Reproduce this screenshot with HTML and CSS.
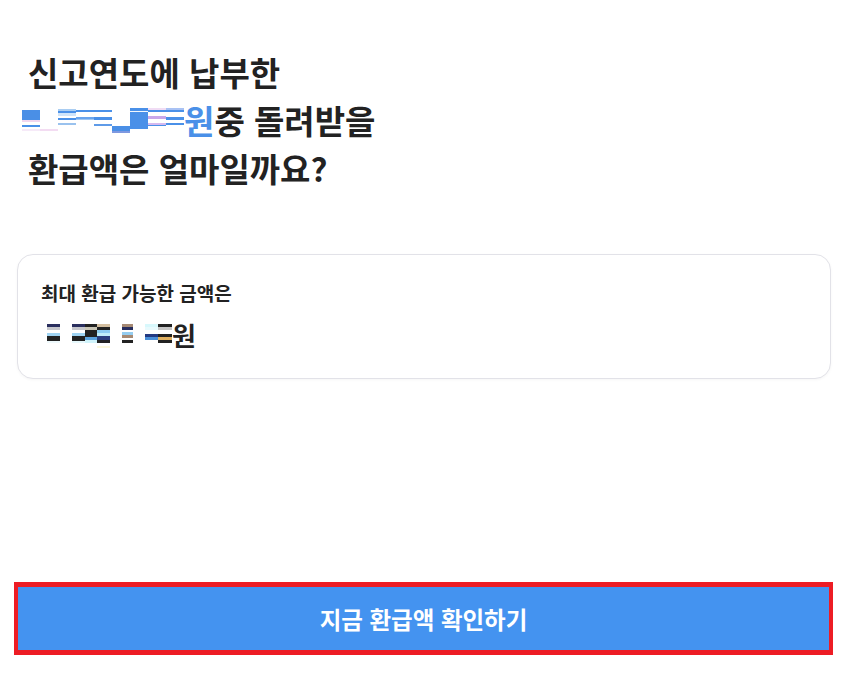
FILE: index.html
```html
<!DOCTYPE html>
<html lang="ko">
<head>
<meta charset="utf-8">
<title>환급액 확인</title>
<link rel="stylesheet" href="styles.css">
</head>
<body>
<main class="page">
  <h1 class="title">신고연도에 납부한<br><span class="mask mask-title"><span class="t t1"></span><span class="t t2"></span><span class="t t3"></span><span class="t t4"></span><span class="t t5"></span><span class="t t6"></span><span class="t t7"></span><span class="t t8"></span><span class="t t9"></span></span><span class="accent">원</span>중 돌려받을<br>환급액은 얼마일까요?</h1>

  <section class="card">
    <p class="label">최대 환급 가능한 금액은</p>
    <p class="amount"><span class="mask mask-amount"><span class="a a1"></span><span class="a gap"></span><span class="a a2"></span><span class="a a3"></span><span class="a a4"></span><span class="a gap"></span><span class="a a5"></span><span class="a gap"></span><span class="a a6"></span><span class="a a7"></span></span>원</p>
  </section>

  <div class="spacer"></div>

  <div class="cta-wrap">
    <button class="cta" type="button">지금 환급액 확인하기</button>
  </div>
</main>
</body>
</html>
```

FILE: styles.css
```css
* {
  box-sizing: border-box;
}

html,
body {
  margin: 0;
  padding: 0;
  background: #ffffff;
}

body {
  font-family: "Noto Sans CJK KR", "Noto Sans", sans-serif;
  color: #222222;
}

.page {
  min-height: 100vh;
  display: flex;
  flex-direction: column;
  padding: 0 18px 24px 17px;
}

.title {
  margin: 0;
  padding: 48px 0 0 11px;
  font-size: 33px;
  line-height: 48px;
  font-weight: 700;
  color: #222222;
  letter-spacing: 0;
}

.accent {
  color: #4a90e8;
}

.mask {
  display: inline-flex;
  vertical-align: middle;
}

.mask-title {
  margin-left: -6px;
  height: 28px;
  position: relative;
  top: -4px;
}

.t {
  display: block;
  width: 18px;
  height: 28px;
}

.t1 {
  background: linear-gradient(to bottom,
    transparent 0 3px, #4a8fe6 3px 13px, #f2d6ee 13px 15px, transparent 15px 18px,
    #4a90e8 18px 20px, transparent 20px 22px, #f6eaf8 22px 24px, transparent 24px);
}
.t2 {
  background: linear-gradient(to bottom,
    transparent 0 22px, #f3dcf2 22px 24px, transparent 24px);
}
.t3 {
  background: linear-gradient(to bottom,
    transparent 0 2px, #a9cdf2 2px 4px, #4a90e8 4px 6px, #cfe4fa 6px 9px, transparent 9px 11px,
    #4a90e8 11px 13px, transparent 13px 16px, #9ac2ee 16px 18px, transparent 18px);
}
.t4 {
  background: linear-gradient(to bottom,
    transparent 0 3px, #4a90e8 3px 5px, transparent 5px 10px, #6aa5ee 10px 12px,
    #9fc6f2 12px 13px, transparent 13px);
}
.t5 {
  background: linear-gradient(to bottom,
    transparent 0 3px, #4a90e8 3px 5px, transparent 5px 10px, #4a90e8 10px 13px,
    transparent 13px 17px, #5f9be8 17px 19px, transparent 19px);
}
.t6 {
  background: linear-gradient(to bottom,
    transparent 0 19px, #4a8fe6 19px 24px, #7e98e0 24px 26px, transparent 26px);
}
.t7 {
  background: linear-gradient(to bottom,
    transparent 0 1px, #4a90e8 1px 4px, #f2f7fd 4px 5px, #4a90e8 5px 22px, transparent 22px);
}
.t8 {
  background: linear-gradient(to bottom,
    transparent 0 1px, #f0dcf4 1px 3px, #4a90e8 3px 5px, transparent 5px 9px,
    #c9a7ea 9px 12px, transparent 12px 16px, #d6b9ef 16px 18px, #4a90e8 18px 19px, transparent 19px);
}
.t9 {
  background: linear-gradient(to bottom,
    transparent 0 1px, #a9c2f4 1px 3px, #4a90e8 3px 5px, transparent 5px 10px,
    #4a90e8 10px 13px, transparent 13px 16px, #4a90e8 16px 18px, transparent 18px);
}

.card {
  margin-top: 62px;
  border: 1px solid #e2e2e8;
  border-radius: 16px;
  padding: 24px 23px 26px 23px;
  background: #ffffff;
  box-shadow: 0 1px 3px rgba(0, 0, 0, 0.04);
}

.label {
  margin: 0;
  font-size: 19px;
  line-height: 28px;
  font-weight: 600;
  color: #222222;
}

.amount {
  margin: 11px 0 0 0;
  font-size: 26px;
  line-height: 34px;
  font-weight: 700;
  color: #222222;
  display: flex;
  align-items: center;
}

.mask-amount {
  margin-left: 6px;
  height: 26px;
}

.a {
  display: block;
  width: 13px;
  height: 26px;
}
.a.gap {
  width: 12px;
}
.a1 {
  width: 13px;
  background: linear-gradient(to bottom,
    transparent 0 2px, #2a2f5e 2px 5px, #c6c7cc 5px 8px, transparent 8px 11px,
    #9fd3f2 11px 14px, #222222 14px 19px, #eef9fc 19px 21px, transparent 21px);
}
.a2 {
  background: linear-gradient(to bottom,
    transparent 0 2px, #2a2f5e 2px 5px, #c6c7cc 5px 8px, transparent 8px 11px,
    #9fd3f2 11px 14px, #222222 14px 19px, #e6f8fc 19px 21px, transparent 21px);
}
.a3 {
  width: 12px;
  background: linear-gradient(to bottom,
    transparent 0 2px, #222222 2px 5px, #c8c4b4 5px 8px, #222222 8px 15px,
    #5aa3df 15px 18px, #d0f3fa 18px 21px, transparent 21px);
}
.a4 {
  width: 13px;
  background: linear-gradient(to bottom,
    transparent 0 2px, #d4bfa0 2px 5px, #222222 5px 8px, #8ccdf2 8px 11px,
    #bfeefa 11px 14px, #2a3f7e 14px 18px, #222222 18px 21px, transparent 21px 24px,
    #fcf8dc 24px 26px);
}
.a5 {
  width: 11px;
  background: linear-gradient(to bottom,
    transparent 0 2px, #a68a74 2px 5px, #262d5e 5px 8px, transparent 8px 10px,
    #95cdf0 10px 13px, #a68a74 13px 16px, transparent 16px 18px, #222222 18px 21px, transparent 21px);
}
.a6 {
  width: 13px;
  background: linear-gradient(to bottom,
    transparent 0 2px, #d8f8fc 2px 5px, #e8fafd 5px 8px, transparent 8px 12px,
    #243a82 12px 15px, #4a8fd8 15px 18px, transparent 18px);
}
.a7 {
  width: 14px;
  background: linear-gradient(to bottom,
    transparent 0 2px, #222222 2px 5px, #c6c6c6 5px 8px, transparent 8px 12px,
    #222222 12px 15px, #e0b060 15px 18px, #222222 18px 21px, transparent 21px);
}

.spacer {
  flex: 1;
}

.cta-wrap {
  margin: 0 -2px 0 -3px;
}

.cta {
  display: block;
  width: 100%;
  height: 73px;
  border-style: solid;
  border-color: #ed1c24;
  border-width: 5px 4px;
  background: #4493f0;
  color: #ffffff;
  font-family: "Noto Sans CJK KR", "Noto Sans", sans-serif;
  font-size: 23.5px;
  font-weight: 700;
  line-height: 30px;
  padding: 0;
  cursor: pointer;
}
```
